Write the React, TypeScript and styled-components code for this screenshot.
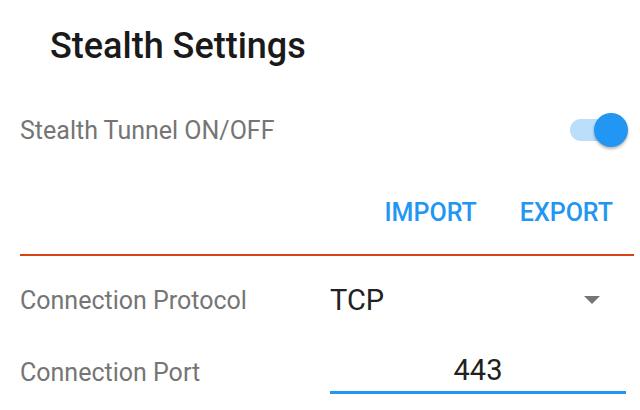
import React from "react";
import styled, { createGlobalStyle } from "styled-components";

const Global = createGlobalStyle`
  html, body { margin: 0; padding: 0; background: #ffffff; }
  body { font-family: Roboto, "Noto Sans", sans-serif; }
`;

const Page = styled.div`
  width: 640px;
  height: 410px;
  box-sizing: border-box;
  padding: 0 6px 0 20px;
  display: flex;
  flex-direction: column;
  overflow: hidden;
`;

const Title = styled.h1`
  margin: 0;
  padding: 24px 0 0 30px;
  height: 48px;
  font-size: 36px;
  font-weight: 500;
  color: #1a1a1a;
  line-height: 44px;
`;

const Row = styled.div<{ $h: number }>`
  display: flex;
  align-items: center;
  height: ${(p) => p.$h}px;
`;

const Label = styled.span<{ $shift?: number }>`
  font-size: 25px;
  color: #757575;
  flex: 0 0 310px;
  margin-top: ${(p) => p.$shift ?? 0}px;
`;

const Spacer = styled.div`
  flex: 1;
`;

const Track = styled.div`
  position: relative;
  width: 48px;
  height: 22px;
  border-radius: 11px;
  background: #bbdefb;
  margin-right: 16px;
`;

const Thumb = styled.div`
  position: absolute;
  right: -10px;
  top: -6px;
  width: 34px;
  height: 34px;
  border-radius: 50%;
  background: #2196f3;
  box-shadow: 0 2px 3px rgba(0, 0, 0, 0.3);
`;

const Actions = styled.div`
  display: flex;
  justify-content: flex-end;
  gap: 43px;
  padding-right: 21px;
`;

const TextButton = styled.button`
  border: none;
  background: none;
  padding: 0;
  font-family: Roboto, sans-serif;
  font-size: 25px;
  font-weight: 500;
  color: #2196f3;
  cursor: pointer;
`;

const Divider = styled.div`
  height: 2px;
  margin-top: 18px;
  background: #d84315;
`;

const SelectValue = styled.div`
  flex: 1;
  display: flex;
  align-items: center;
  justify-content: space-between;
  padding-right: 34px;
  font-size: 29px;
  color: #212121;
`;

const Caret = styled.div`
  width: 0;
  height: 0;
  border-left: 8px solid transparent;
  border-right: 8px solid transparent;
  border-top: 8px solid #757575;
`;

const InputWrap = styled.div`
  flex: 1;
  margin-right: 8px;
  align-self: flex-end;
  border-bottom: 3px solid #2196f3;
  text-align: center;
  font-size: 29px;
  line-height: 34px;
  color: #212121;
  padding-bottom: 4px;
`;

export default function App() {
  return (
    <>
      <Global />
      <Page>
        <Title>Stealth Settings</Title>
        <Row $h={116}>
          <Label>Stealth Tunnel ON/OFF</Label>
          <Spacer />
          <Track>
            <Thumb />
          </Track>
        </Row>
        <Row $h={48}>
          <Spacer />
          <Actions>
            <TextButton>IMPORT</TextButton>
            <TextButton>EXPORT</TextButton>
          </Actions>
        </Row>
        <Divider />
        <Row $h={88}>
          <Label>Connection Protocol</Label>
          <SelectValue>
            <span>TCP</span>
            <Caret />
          </SelectValue>
        </Row>
        <Row $h={50}>
          <Label $shift={6}>Connection Port</Label>
          <InputWrap>443</InputWrap>
        </Row>
      </Page>
    </>
  );
}
